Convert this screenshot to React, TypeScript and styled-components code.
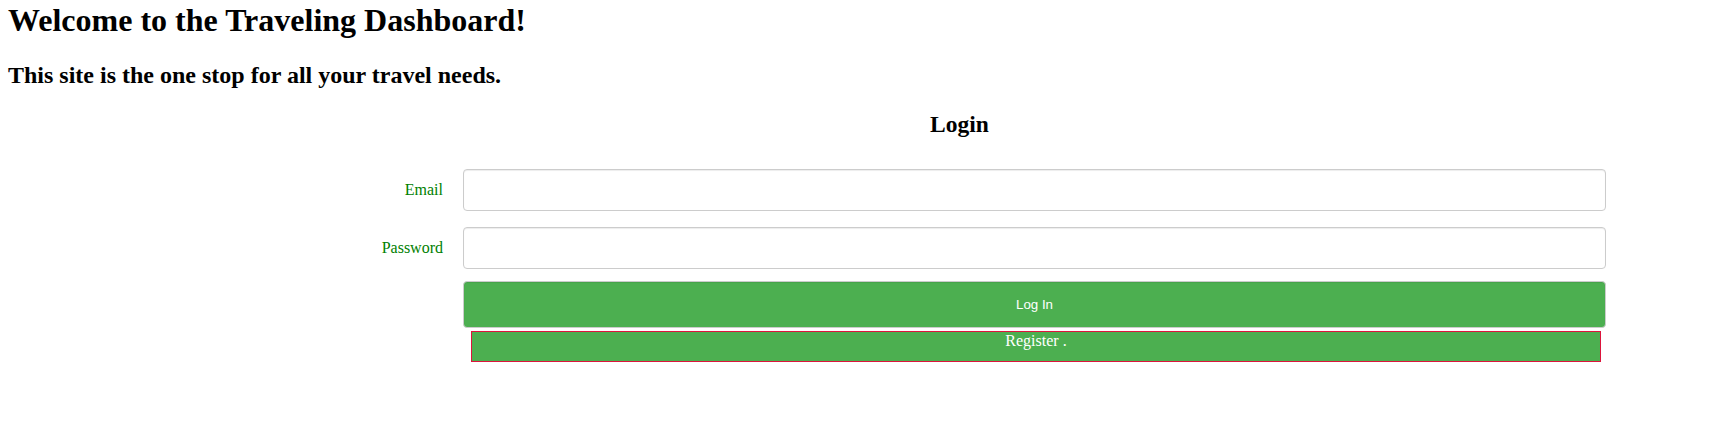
import React from "react";
import styled, { createGlobalStyle } from "styled-components";

const GlobalStyle = createGlobalStyle`
  html, body {
    margin: 0;
    padding: 0;
    background: #ffffff;
  }
  body {
    font-family: "Liberation Serif", "Times New Roman", serif;
    color: #000000;
  }
  * { box-sizing: border-box; }
`;

const Page = styled.div`
  padding: 0 8px;
  display: flex;
  flex-direction: column;
`;

const Title = styled.h1`
  margin: 2px 0 0;
  font-size: 32px;
  line-height: 36px;
  font-weight: 700;
`;

const Subtitle = styled.h2`
  margin: 23px 0 0;
  font-size: 24px;
  line-height: 28px;
  font-weight: 700;
`;

const Panel = styled.section`
  margin: 21px 84px 0 290px;
  display: flex;
  flex-direction: column;
`;

const PanelTitle = styled.h3`
  margin: 0;
  font-size: 23.5px;
  line-height: 28px;
  font-weight: 700;
  text-align: center;
`;

const Form = styled.form`
  margin-top: 31px;
  display: grid;
  grid-template-columns: 145px 1143px;
  column-gap: 20px;
  row-gap: 16px;
  align-items: center;
`;

const Label = styled.label`
  text-align: right;
  color: #008000;
  font-size: 16px;
  line-height: 18px;
`;

const Field = styled.input`
  height: 42px;
  width: 100%;
  padding: 6px 12px;
  border: 1px solid #cccccc;
  border-radius: 4px;
  background: #ffffff;
  box-shadow: inset 0 1px 1px rgba(0, 0, 0, 0.075);
  font-family: "Liberation Sans", Arial, sans-serif;
  font-size: 14px;
  outline: none;
`;

const Actions = styled.div`
  grid-column: 2;
  display: flex;
  flex-direction: column;
  margin-top: -4px;
`;

const SubmitButton = styled.button`
  height: 47px;
  width: 100%;
  border: 1px solid #cccccc;
  border-radius: 4px;
  background: #4caf50;
  box-shadow: inset 0 1px 1px rgba(0, 0, 0, 0.075);
  color: #ffffff;
  font-family: "Liberation Sans", Arial, sans-serif;
  font-size: 13.33px;
  cursor: pointer;
`;

const RegisterLink = styled.a`
  margin: 3px 5px 0 8px;
  height: 31px;
  display: block;
  border: 1px solid #dc143c;
  background: #4caf50;
  color: #ffffff;
  text-align: center;
  text-decoration: none;
  font-size: 16px;
  line-height: 18px;
`;

export default function App() {
  return (
    <>
      <GlobalStyle />
      <Page>
        <Title>Welcome to the Traveling Dashboard!</Title>
        <Subtitle>This site is the one stop for all your travel needs.</Subtitle>
        <Panel>
          <PanelTitle>Login</PanelTitle>
          <Form onSubmit={(e) => e.preventDefault()}>
            <Label htmlFor="email">Email</Label>
            <Field id="email" type="email" />
            <Label htmlFor="password">Password</Label>
            <Field id="password" type="password" />
            <Actions>
              <SubmitButton type="submit">Log In</SubmitButton>
              <RegisterLink href="#">Register .</RegisterLink>
            </Actions>
          </Form>
        </Panel>
      </Page>
    </>
  );
}
